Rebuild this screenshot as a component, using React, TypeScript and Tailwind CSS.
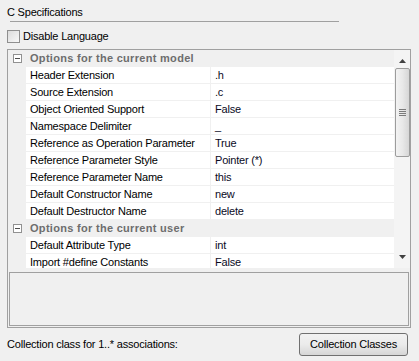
import React from "react";

type Row = { name: string; value: string };
type Group = { title: string; rows: Row[] };

const groups: Group[] = [
  {
    title: "Options for the current model",
    rows: [
      { name: "Header Extension", value: ".h" },
      { name: "Source Extension", value: ".c" },
      { name: "Object Oriented Support", value: "False" },
      { name: "Namespace Delimiter", value: "_" },
      { name: "Reference as Operation Parameter", value: "True" },
      { name: "Reference Parameter Style", value: "Pointer (*)" },
      { name: "Reference Parameter Name", value: "this" },
      { name: "Default Constructor Name", value: "new" },
      { name: "Default Destructor Name", value: "delete" },
    ],
  },
  {
    title: "Options for the current user",
    rows: [
      { name: "Default Attribute Type", value: "int" },
      { name: "Import #define Constants", value: "False" },
    ],
  },
];

function MinusBox() {
  return (
    <span className="flex h-[9px] w-[9px] items-center justify-center border border-[#919191] bg-white">
      <span className="h-px w-[5px] bg-[#4d4d4d]" />
    </span>
  );
}

function Scrollbar() {
  return (
    <div className="flex w-[16px] shrink-0 flex-col items-center bg-[#f4f4f4]">
      <div className="flex h-[18px] w-full items-center justify-center pt-[3px]">
        <svg width="7" height="4" viewBox="0 0 7 4">
          <path d="M3.5 0 L7 4 L0 4 Z" fill="#404040" />
        </svg>
      </div>
      <div className="flex h-[89px] w-[15px] items-center justify-center rounded-[2px] border border-[#9c9c9c] bg-gradient-to-r from-[#f3f3f3] via-[#e8e8e8] to-[#d6d6d6]">
        <div className="flex flex-col gap-[1px]">
          <span className="h-px w-[7px] bg-[#7a7a7a]" />
          <span className="h-px w-[7px] bg-[#7a7a7a]" />
          <span className="h-px w-[7px] bg-[#7a7a7a]" />
          <span className="h-px w-[7px] bg-[#7a7a7a]" />
        </div>
      </div>
      <div className="flex-1" />
      <div className="flex h-[17px] w-full items-center justify-center pb-[5px]">
        <svg width="7" height="4" viewBox="0 0 7 4">
          <path d="M0 0 L7 0 L3.5 4 Z" fill="#404040" />
        </svg>
      </div>
    </div>
  );
}

export default function App() {
  return (
    <div
      className="h-[361px] w-[419px] overflow-hidden bg-[#f0f0f0] text-[11px] tracking-[-0.2px] text-black"
      style={{ fontFamily: '"Liberation Sans", Arial, sans-serif' }}
    >
      <div className="ml-[7px] mt-[6px] h-[13px] leading-[13px]">C Specifications</div>
      <div className="ml-[10px] mt-[2px] h-px w-[329px] bg-[#a0a0a0]" />

      <label className="ml-[7px] mt-[8px] flex h-[13px] items-center gap-[3px]">
        <span className="h-[13px] w-[13px] border border-[#8f8f8f] bg-gradient-to-br from-[#dcdcdc] to-[#f8f8f8]" />
        <span className="leading-[13px]">Disable Language</span>
      </label>

      <div className="ml-[7px] mt-[6px] flex h-[279px] w-[404px] flex-col border border-[#a0a0a0]">
        <div className="flex h-[218px] overflow-hidden">
          <div className="flex-1 overflow-hidden">
            {groups.map((g) => (
              <div key={g.title}>
                <div className="flex h-[17px] items-center border-b border-[#f0f0f0] bg-[#f0f0f0]">
                  <div className="flex w-[18px] justify-center pl-[1px]">
                    <MinusBox />
                  </div>
                  <span className="pl-[4px] font-bold tracking-[0.3px] text-[#6d6d6d]">{g.title}</span>
                </div>
                {g.rows.map((r) => (
                  <div key={r.name} className="flex h-[17px] bg-[#f0f0f0]">
                    <div className="w-[18px] shrink-0" />
                    <div className="flex flex-1 border-b border-[#f0f0f0] bg-white">
                      <div className="w-[185px] shrink-0 truncate border-r border-[#f0f0f0] pl-[4px] leading-[16px]">
                        {r.name}
                      </div>
                      <div className="flex-1 truncate pl-[4px] leading-[16px] text-[#0a0a1e]">
                        {r.value}
                      </div>
                    </div>
                  </div>
                ))}
              </div>
            ))}
          </div>
          <Scrollbar />
        </div>
        <div className="mx-[1px] mt-[4px] h-[54px] border border-[#a0a0a0] bg-[#f0f0f0]" />
      </div>

      <div className="mt-[4px] flex h-[25px] items-center justify-between pl-[7px] pr-[11px]">
        <span className="leading-[13px]">Collection class for 1..* associations:</span>
        <button className="h-[23px] w-[109px] rounded-[3px] border border-[#707070] bg-gradient-to-b from-[#f2f2f2] via-[#ebebeb] to-[#d6d6d6] leading-[13px]">
          Collection Classes
        </button>
      </div>
    </div>
  );
}
